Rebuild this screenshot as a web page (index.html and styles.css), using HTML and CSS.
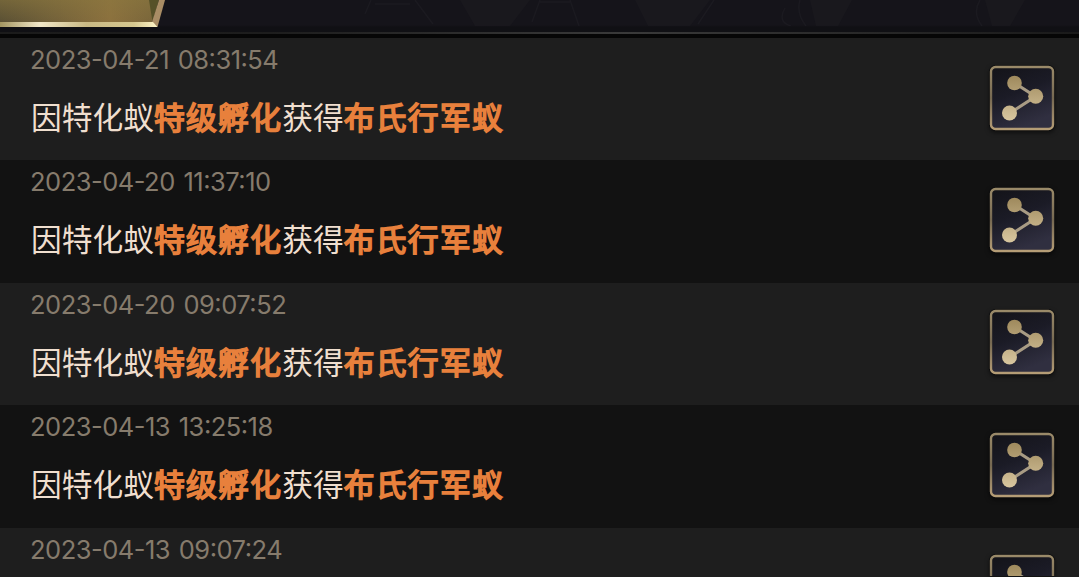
FILE: index.html
```
<!DOCTYPE html>
<html lang="zh-CN">
<head>
<meta charset="UTF-8">
<meta name="viewport" content="width=device-width, initial-scale=1.0">
<title>孵化记录</title>
<link rel="stylesheet" href="styles.css">
</head>
<body>
<svg width="0" height="0" class="defs">
    <defs>
        <linearGradient id="frame" x1="0" y1="0" x2="0" y2="1">
            <stop offset="0" stop-color="#9a8a69"/>
            <stop offset="0.5" stop-color="#766952"/>
            <stop offset="1" stop-color="#b59d76"/>
        </linearGradient>
        <linearGradient id="plate" x1="0" y1="0" x2="0.4" y2="1">
            <stop offset="0" stop-color="#131318"/>
            <stop offset="0.5" stop-color="#1b1b26"/>
            <stop offset="1" stop-color="#302f40"/>
        </linearGradient>
        <linearGradient id="gold" gradientUnits="userSpaceOnUse" x1="0" y1="12" x2="0" y2="56">
            <stop offset="0" stop-color="#a08b5e"/>
            <stop offset="1" stop-color="#d9c7a0"/>
        </linearGradient>
        <symbol id="share" viewBox="0 0 66 66">
            <rect x="1.5" y="1.5" width="63" height="63" rx="5" fill="url(#plate)" stroke="#0d0d0e" stroke-width="3"/>
            <rect x="2" y="2" width="62" height="62" rx="4.5" fill="none" stroke="url(#frame)" stroke-width="2.4"/>
            <path d="M25.5 18 46.5 31.5 21 48" fill="none" stroke="#a89b84" stroke-width="3.2"/>
            <g fill="url(#gold)">
                <circle cx="25.5" cy="18" r="7.3"/>
                <circle cx="46.7" cy="31.3" r="7.5"/>
                <circle cx="20.5" cy="48" r="7.5"/>
            </g>
        </symbol>
    </defs>
</svg>
<div class="header">
    <svg class="tab" width="170" height="32" viewBox="0 0 170 32">
        <defs>
            <linearGradient id="tabFill" x1="0" y1="0" x2="1" y2="0">
                <stop offset="0" stop-color="#5a5034"/>
                <stop offset="0.35" stop-color="#74623a"/>
                <stop offset="0.7" stop-color="#8c713e"/>
                <stop offset="1" stop-color="#77643a"/>
            </linearGradient>
            <linearGradient id="tabEdge" x1="0" y1="0" x2="1" y2="0">
                <stop offset="0" stop-color="#a39560"/>
                <stop offset="0.25" stop-color="#f1e7c8"/>
                <stop offset="0.55" stop-color="#c9b985"/>
                <stop offset="0.85" stop-color="#d5c78f"/>
                <stop offset="1" stop-color="#fff5c8"/>
            </linearGradient>
            <linearGradient id="tabShade" x1="0" y1="0" x2="0" y2="1">
                <stop offset="0" stop-color="#8c793f" stop-opacity="0.5"/>
                <stop offset="1" stop-color="#8c793f" stop-opacity="0"/>
            </linearGradient>
        </defs>
        <path d="M0 0H158L152 22H0Z" fill="url(#tabFill)"/>
        <path d="M0 0H158L152 22H0Z" fill="url(#tabShade)"/>
        <path d="M149 0H159L152.5 22Z" fill="#565128"/>
        <path d="M159 0H165L157.5 27L152 22Z" fill="#a98d65"/>
        <path d="M0 22H153L157.5 27H0Z" fill="url(#tabEdge)"/>
    </svg>
    <svg class="pattern" width="909" height="26" viewBox="0 0 909 26">
        <g fill="none" stroke="#1b1a20" stroke-width="1.5">
            <path d="M195 14 201 0M245 0 263 24M205 4H240"/>
            <path d="M362 22 370 0M370 2H400M400 0 409 26"/>
            <path d="M528 24 544 0M615 8Q607 22 621 26"/>
            <path d="M630 0Q626 13 636 26"/>
            <path d="M810 0Q802 13 812 26"/>
        </g>
        <g fill="#1b1a1f" opacity="0.7">
            <path d="M290 0H360L340 26H305Z"/>
            <path d="M465 0H540L520 26H478Z"/>
            <path d="M640 0H682L668 26H646Z"/>
            <path d="M815 0H855L840 26H822Z"/>
        </g>
    </svg>
</div>
<div class="line"></div>
<div class="list">
    <div class="row">
        <div class="info">
            <div class="time">2023-04-21 08:31:54</div>
            <div class="text">因特化蚁<b>特级孵化</b>获得<b>布氏行军蚁</b></div>
        </div>
        <svg class="share"><use href="#share"/></svg>
    </div>
    <div class="row">
        <div class="info">
            <div class="time">2023-04-20 11:37:10</div>
            <div class="text">因特化蚁<b>特级孵化</b>获得<b>布氏行军蚁</b></div>
        </div>
        <svg class="share"><use href="#share"/></svg>
    </div>
    <div class="row">
        <div class="info">
            <div class="time">2023-04-20 09:07:52</div>
            <div class="text">因特化蚁<b>特级孵化</b>获得<b>布氏行军蚁</b></div>
        </div>
        <svg class="share"><use href="#share"/></svg>
    </div>
    <div class="row">
        <div class="info">
            <div class="time">2023-04-13 13:25:18</div>
            <div class="text">因特化蚁<b>特级孵化</b>获得<b>布氏行军蚁</b></div>
        </div>
        <svg class="share"><use href="#share"/></svg>
    </div>
    <div class="row last">
        <div class="info">
            <div class="time">2023-04-13 09:07:24</div>
        </div>
        <svg class="share" viewBox="0 0 66 22"><use href="#share" width="66" height="66"/></svg>
    </div>
</div>
</body>
</html>
```
FILE: styles.css
```
body {
    margin: 0;
    height: 577px;
    overflow: hidden;
    display: flex;
    flex-direction: column;
    background-color: #121212;
    font-family: Inter, "Noto Sans CJK SC", sans-serif;
}
.defs {
    position: absolute;
}
.header {
    flex: none;
    display: flex;
    height: 32px;
    background: linear-gradient(#15141a 0, #15141a 25px, #101014 27px, #101014 100%);
}
.tab,
.pattern {
    flex: none;
}
.line {
    flex: none;
    height: 2px;
    border-bottom: 4px solid #060606;
    background: linear-gradient(90deg, #1b1b1b, #1d1d1d 25%, #3a3a3a 58%, #303030 70%, #1a1a1a);
}
.list {
    flex: 1;
    min-height: 0;
    overflow: hidden;
}
.row {
    box-sizing: border-box;
    height: 122.4px;
    padding: 6px 24px 0 30px;
    display: flex;
    justify-content: space-between;
    background-color: #121212;
}
.row:nth-child(odd) {
    background-color: #1e1e1e;
}
.row.last {
    height: 49.4px;
}
.time {
    height: 32px;
    line-height: 32px;
    font-size: 25.5px;
    letter-spacing: -0.5px;
    word-spacing: 2px;
    font-weight: 400;
    font-feature-settings: "case";
    color: #867b6c;
    white-space: nowrap;
}
.text {
    margin: 17px 0 0 1px;
    height: 46px;
    line-height: 46px;
    font-family: "Noto Sans CJK SC", sans-serif;
    font-size: 30.75px;
    color: #f0dfcf;
    white-space: nowrap;
}
.text b {
    font-weight: 400;
    letter-spacing: 1.3px;
    color: #e8803c;
    -webkit-text-stroke: 1.7px #e8803c;
}
.share {
    flex: none;
    width: 66px;
    height: 66px;
    margin-top: 20.6px;
    filter: drop-shadow(0 2px 2px rgba(0, 0, 0, 0.5));
}
.last .share {
    height: 22px;
}
```
